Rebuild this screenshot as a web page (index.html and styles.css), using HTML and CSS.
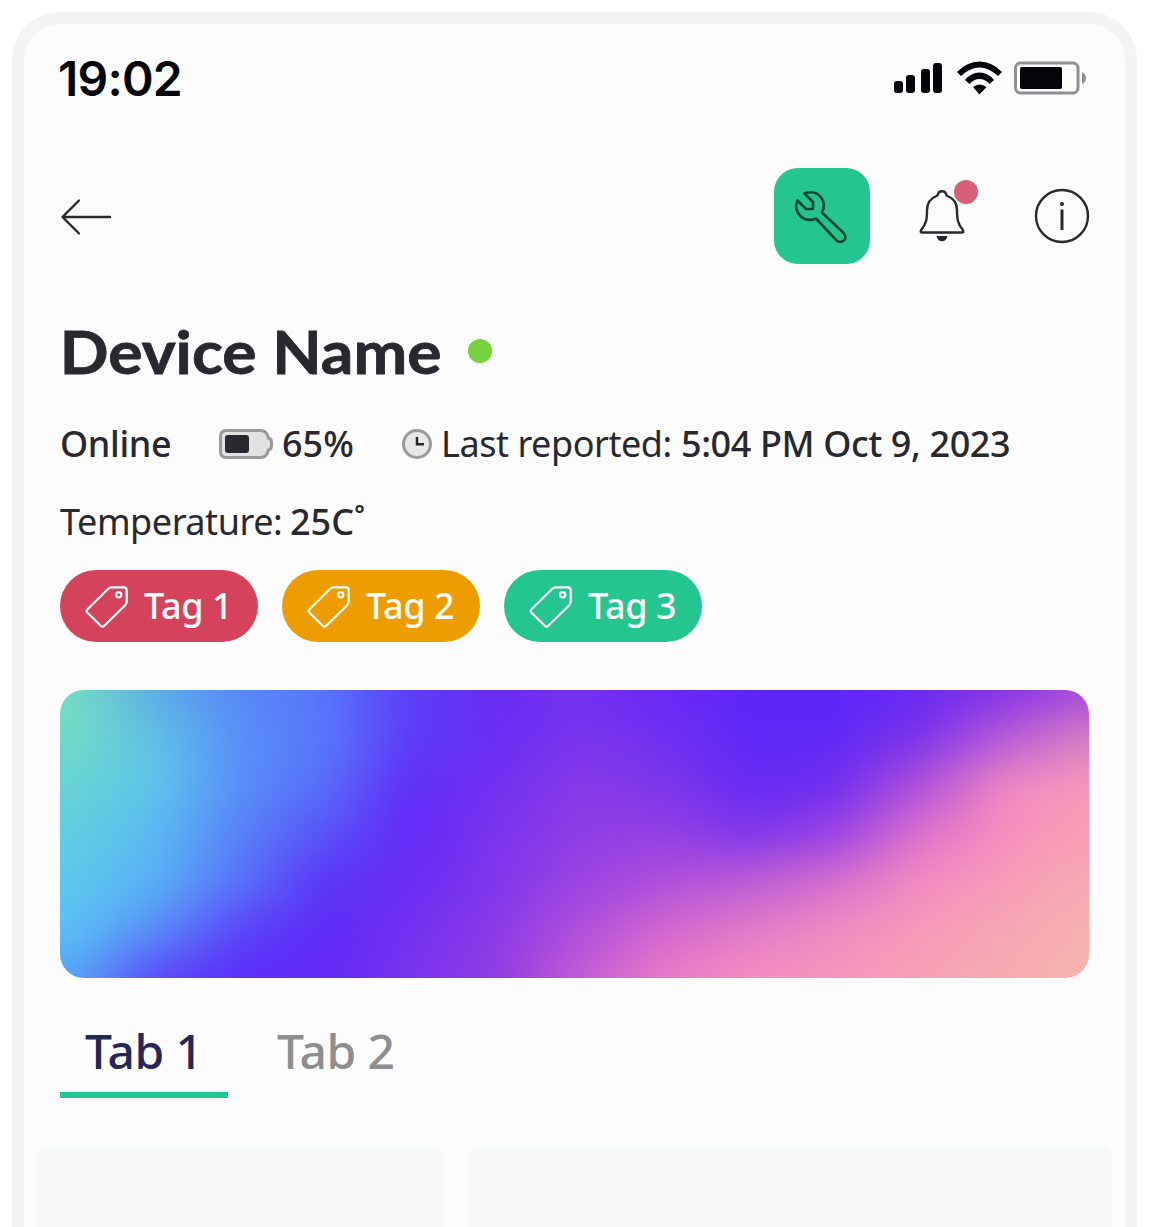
FILE: index.html
```html
<!DOCTYPE html>
<html lang="en">
<head>
<meta charset="utf-8">
<title>Device Name</title>
<link rel="stylesheet" href="styles.css">
</head>
<body>
<main class="phone">
  <header class="status">
    <span class="clock">19:02</span>
    <svg class="status-icons" width="194" height="36" viewBox="0 0 194 36">
      <g fill="#04040a">
        <rect x="0" y="21" width="9" height="12" rx="3"/>
        <rect x="12" y="15" width="9" height="18" rx="3"/>
        <rect x="27" y="9" width="9" height="24" rx="3"/>
        <rect x="39" y="3" width="9" height="30" rx="3"/>
        <path d="M63 12Q73 1.500 85.500 1.500T108 12L104 16Q95 7.500 85.500 7.500T67 16Z"/>
        <path d="M71 20Q77 12.500 85.500 12.500T100 20L95.500 24Q91 19 85.500 19T75.500 24Z"/>
        <path d="M79 27Q85.500 22 92.500 27L85.500 34.500Z"/>
        <rect x="126" y="7" width="42" height="22" rx="2"/>
      </g>
      <rect x="121.500" y="3" width="62.500" height="30" rx="5" fill="none" stroke="#909094" stroke-width="3"/>
      <path d="M188 12Q192 14 192 18T188 24Z" fill="#909094"/>
    </svg>
  </header>

  <nav class="toolbar">
    <svg class="back" width="54" height="40" viewBox="0 0 54 40" fill="none" stroke="#28282e" stroke-width="2.400" stroke-linecap="round" stroke-linejoin="round"><path d="M50 21H3M19 4.500L2.500 21L19 37.500"/></svg>
    <div class="actions">
      <span class="action action-on">
        <svg width="96" height="96" viewBox="0 0 96 96" fill="none" stroke="#08462f" stroke-width="2.600" stroke-linejoin="round"><path d="M30.500 25.500C37 23 43.500 24.500 47.500 30C50.500 34.500 50.500 39.500 48 44.500L69.500 65Q73 69 70 72.500Q66 75.500 62 72L42 50.500C36 53 30.500 52 26.500 48C21.500 43 21 38 23.500 32.500L32 41H39V34Z"/></svg>
      </span>
      <span class="action bell">
        <svg width="48" height="54" viewBox="0 0 48 54" fill="none" stroke="#28282e" stroke-width="2.400" stroke-linejoin="round"><path d="M19.500 6.500C20.500 .8 27.500 .8 28.500 6.500C35 9 39 13 39 21C39 30 39.500 34 44.500 40.500Q46.500 43.500 43.500 43.500H4.500Q1.500 43.500 3.500 40.500C8.500 34 9 30 9 21C9 13 13 9 19.500 6.500Z"/><path d="M18.500 47H29.500C28.500 54 19.500 54 18.500 47Z" fill="#28282e" stroke="none"/></svg>
        <i class="badge"></i>
      </span>
      <span class="action">
        <svg width="56" height="56" viewBox="0 0 56 56"><circle cx="28" cy="28" r="26" fill="none" stroke="#28282e" stroke-width="2.400"/><circle cx="28" cy="16" r="2" fill="#28282e"/><path d="M28 21.500V42" stroke="#28282e" stroke-width="3"/></svg>
      </span>
    </div>
  </nav>

  <div class="title"><h1>Device Name</h1><i class="dot"></i></div>

  <div class="meta">
    <b class="online">Online</b>
    <svg class="batt" width="54" height="30" viewBox="0 0 54 30"><path d="M7.500 1.500H41Q46 1.500 48 5L49.500 9Q52.500 10 52.500 13V17Q52.500 20 49.500 21L48 25Q46 28.500 41 28.500H7.500Q1.500 28.500 1.500 22.500V7.500Q1.500 1.500 7.500 1.500Z" fill="#e2e2e3" stroke="#99999e" stroke-width="3"/><rect x="6" y="6" width="24" height="18" rx="3" fill="#28282e"/></svg>
    <b class="percent">65%</b>
    <svg class="time" width="30" height="30" viewBox="0 0 30 30"><circle cx="15" cy="15" r="13.500" fill="#e7e7e8" stroke="#99999e" stroke-width="3"/><path d="M15 8V15.300H22" fill="none" stroke="#28282e" stroke-width="2.500"/></svg>
    <span class="reported">Last reported:</span>
    <b class="date">5:04 PM Oct 9, 2023</b>
  </div>
  <div class="meta temp"><span class="temp-label">Temperature:</span><b class="temp-value">25C˚</b></div>

  <div class="tags">
    <span class="tag red"><svg width="44" height="44" viewBox="0 0 44 44"><use href="#tag-icon"/></svg><b>Tag 1</b></span>
    <span class="tag amber"><svg width="44" height="44" viewBox="0 0 44 44"><use href="#tag-icon"/></svg><b>Tag 2</b></span>
    <span class="tag green"><svg width="44" height="44" viewBox="0 0 44 44"><g id="tag-icon" fill="none" stroke="#fcfcfc" stroke-width="2.200" stroke-linejoin="round"><path d="M27.500 3.300H40Q42.700 3.300 42.700 6V18.500L41 21.500L20 42Q18.500 43.300 17 42L3.300 28.500Q2 27 3.300 25.500L24.500 4.500Z"/><circle cx="34.700" cy="10.700" r="2.600"/></g></svg><b>Tag 3</b></span>
  </div>

  <div class="banner">
    <svg width="0" height="0"><filter id="soften" x="0" y="0" width="1" height="1" color-interpolation-filters="sRGB"><feGaussianBlur stdDeviation="18 20"/></filter></svg>
    <div class="wash">
      <div class="w1"></div><div class="w2"></div><div class="w3"></div><div class="w4"></div><div class="w5"></div><div class="w6"></div><div class="w7"></div>
    </div>
  </div>

  <div class="tabs"><span class="tab active">Tab 1</span><span class="tab">Tab 2</span></div>
  <div class="cards"><div class="card"></div><div class="card"></div></div>
</main>
</body>
</html>
```
FILE: styles.css
```css
* { box-sizing: border-box; }
body { margin: 0; height: 1227px; padding: 12px 0 0 12px; overflow: hidden; background: #fff; color: #28282e; font-family: "Noto Sans", sans-serif; }
.phone { width: 1125px; height: 1215px; padding: 0 36px; border: 12px solid #f3f5f4; border-bottom: 0; border-radius: 48px 48px 0 0; background: #fcfcfc; display: flex; flex-direction: column; }
svg { display: block; flex: none; }
i { display: block; border-radius: 50%; }
h1, b, span { white-space: nowrap; }
.status { display: flex; justify-content: space-between; height: 108px; padding: 36px 1px 0 0; }
.clock { margin: 1px 0 0 -2px; font: 600 48px/36px Inter, sans-serif; color: #04040a; letter-spacing: -.8px; }
.toolbar { height: 168px; display: flex; justify-content: space-between; align-items: center; }
.actions { display: flex; gap: 24px; margin-right: -21px; }
.action { position: relative; width: 96px; height: 96px; display: grid; place-items: center; }
.action-on { border-radius: 24px; background: #25c58f; }
.badge { position: absolute; left: 60px; top: 12px; width: 24px; height: 24px; background: #d95f76; }
.title { height: 102px; display: flex; align-items: center; }
h1 { margin: -1px 0 0; width: 408px; font: 700 60px/72px Lato, sans-serif; transform: scaleX(1.07); transform-origin: 2px 50%; -webkit-text-stroke: .8px #28282e; }
.dot { width: 24px; height: 24px; background: #76d23d; }
.meta { display: flex; align-items: center; height: 84px; font-size: 36px; line-height: 48px; }
b { font-weight: 500; }
.online { width: 159px; letter-spacing: -.35px; }
.percent { width: 120px; margin-left: 9px; }
.reported { margin-left: 9px; width: 240px; letter-spacing: -.45px; }
.date { letter-spacing: -.38px; }
.temp { height: 72px; }
.temp-label { width: 230px; letter-spacing: -.45px; }
.tags { display: flex; gap: 24px; height: 72px; margin-top: 12px; }
.tag { width: 198px; height: 72px; border-radius: 36px; padding-left: 24px; display: flex; align-items: center; gap: 16px; color: #fcfcfc; font-size: 36px; letter-spacing: -.4px; }
.tag b { padding-bottom: 2px; }
.red { background: #d4435b; }
.amber { background: #ee9d00; }
.green { background: #25c58f; }
.banner { height: 288px; flex: none; margin-top: 48px; border-radius: 24px; overflow: hidden; }
.wash { margin: -84px -60px 0; display: flex; flex-direction: column; filter: url(#soften); }
.wash div { height: 48px; }
.wash .w1, .wash .w7 { height: 108px; }
.w1 { background: linear-gradient(90deg, #76dcc0 72px, #5aace6, #5886fa, #5874fa, #5a3cf8, #6a2cf2, #7430ee, #6828f4, #5c26f8, #5c26f8, #6828f2, #8434e6, #a64cda calc(100% - 60px)); }
.w2 { background: linear-gradient(90deg, #70dcc8 72px, #60c0e4, #588ef8, #5876fa, #5c3cf8, #6a2cf2, #7a34ee, #7030f0, #5e28f6, #6028f4, #7c34ea, #b85ad8, #d880c4 calc(100% - 60px)); }
.w3 { background: linear-gradient(90deg, #68d4d4 72px, #5cc4ec, #588ef8, #586cfa, #602cf6, #7230f0, #883ae6, #7c36ea, #682af2, #702eee, #b050da, #f088c4, #f69ab8 calc(100% - 60px)); }
.w4 { background: linear-gradient(90deg, #60cee0 72px, #5ab8f2, #5880f8, #5850f8, #6428f6, #7c34ee, #903ce4, #9440e4, #7e36ea, #9a42e4, #de72cc, #f690bc, #f8a0b4 calc(100% - 60px)); }
.w5 { background: linear-gradient(90deg, #5cc8ec 72px, #58b0f6, #5870f8, #5a34f6, #6a2cf2, #8036ec, #9a44e2, #b050da, #be5cd6, #d670cc, #f28cc0, #f69cb8, #f6aab2 calc(100% - 60px)); }
.w6 { background: linear-gradient(90deg, #5ac0f4 72px, #588cf8, #5a44f8, #5e2af6, #7430f0, #8a3ae6, #b050da, #d468ce, #e07cc8, #f08cc0, #f69ab8, #f6a6b4, #f6b2ae calc(100% - 60px)); }
.w7 { background: linear-gradient(90deg, #58a4f8 72px, #5a48f8, #5c2cf8, #6428f4, #7a34ee, #903ce4, #c45cd6, #ea7cc6, #f48ec0, #f696bc, #f6a2b6, #f6acb0, #f6b4ae calc(100% - 60px)); }
.tabs { display: flex; gap: 24px; height: 120px; }
.tab { width: 168px; height: 120px; padding-left: 25px; font-size: 48px; line-height: 146px; font-weight: 500; letter-spacing: -.6px; color: #8e8e90; }
.active { color: #262757; border-bottom: 6px solid #25c58f; }
.cards { flex: 1; display: grid; grid-template-columns: 408px 645px; gap: 24px; margin: 48px -24px 0; }
.card { border-radius: 12px 12px 0 0; background: #f7f8f8; }
```
